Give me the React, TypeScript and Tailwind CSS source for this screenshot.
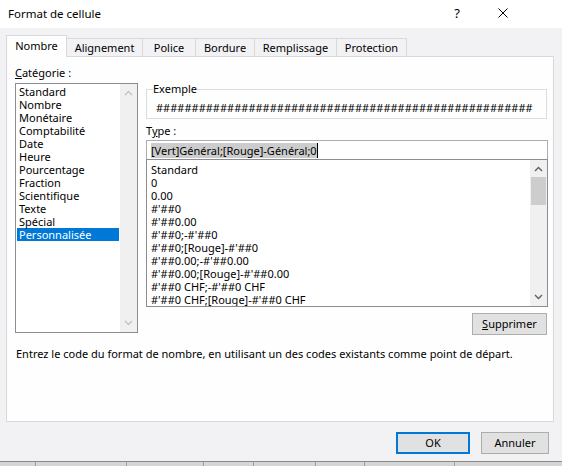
import React from "react";

const categories = [
  "Standard",
  "Nombre",
  "Monétaire",
  "Comptabilité",
  "Date",
  "Heure",
  "Pourcentage",
  "Fraction",
  "Scientifique",
  "Texte",
  "Spécial",
  "Personnalisée",
];

const formats = [
  "Standard",
  "0",
  "0.00",
  "#'##0",
  "#'##0.00",
  "#'##0;-#'##0",
  "#'##0;[Rouge]-#'##0",
  "#'##0.00;-#'##0.00",
  "#'##0.00;[Rouge]-#'##0.00",
  "#'##0 CHF;-#'##0 CHF",
  "#'##0 CHF;[Rouge]-#'##0 CHF",
];

const tabs = [
  { label: "Alignement", w: "w-[76px]" },
  { label: "Police", w: "w-[53px]" },
  { label: "Bordure", w: "w-[59px]" },
  { label: "Remplissage", w: "w-[82px]" },
  { label: "Protection", w: "w-[70px]" },
];

const Chevron: React.FC<{ up?: boolean; color: string }> = ({ up, color }) => (
  <svg width="9" height="6" viewBox="0 0 9 6" className="block">
    <path
      d={up ? "M1 5 L4.5 1.5 L8 5" : "M1 1 L4.5 4.5 L8 1"}
      fill="none"
      stroke={color}
      strokeWidth="1.4"
    />
  </svg>
);

export default function App() {
  return (
    <div className="w-[562px] h-[466px] overflow-hidden bg-[#f2f1f4] text-[11px] leading-[16px] text-black font-['Noto_Sans',sans-serif] flex flex-col">
      {/* title bar */}
      <div className="h-[28px] bg-white flex items-center pl-[8px] shrink-0">
        <span className="flex-1 text-[11.5px] -mt-[1px]">Format de cellule</span>
        <span className="w-[10px] text-center text-[13px] mr-[36px] -mt-[2px]">?</span>
        <svg width="10" height="10" viewBox="0 0 10 10" className="mr-[54px] -mt-[2px]">
          <path d="M0.5 0.5 L9.5 9.5 M9.5 0.5 L0.5 9.5" stroke="#000" strokeWidth="1" />
        </svg>
      </div>

      {/* tabs */}
      <div className="flex items-end pl-[6px] pt-[7px] -mb-px relative z-10">
        <div className="w-[61px] h-[22px] border border-b-0 border-[#d9d9d9] bg-[#fdfefd] flex items-center justify-center pb-[2px]">
          Nombre
        </div>
        {tabs.map((t) => (
          <div
            key={t.label}
            className={`${t.w} h-[19px] border-t border-r border-[#d9d9d9] flex items-center justify-center`}
          >
            {t.label}
          </div>
        ))}
      </div>

      {/* panel */}
      <div className="ml-[6px] w-[548px] h-[366px] border border-[#d9d9d9] bg-[#fdfefd] pt-[8px] pl-[8px] flex flex-col">
        <div className="flex">
          {/* category column */}
          <div className="w-[123px] flex flex-col">
            <span>
              <span className="underline">C</span>atégorie :
            </span>
            <div className="mt-[2px] h-[250px] border border-[#8b8d94] bg-white flex">
              <div className="flex-1 pt-[1px] px-[1px] leading-[13px]">
                {categories.map((c) => (
                  <div
                    key={c}
                    className={`pl-[2px] h-[13px] ${c === "Personnalisée" ? "bg-[#0078d7] text-white" : ""}`}
                  >
                    {c}
                  </div>
                ))}
              </div>
              <div className="w-[17px] bg-[#f0f0f0] flex flex-col items-center justify-between pt-[6px] pb-[6px]">
                <Chevron up color="#c3c3c3" />
                <Chevron color="#c3c3c3" />
              </div>
            </div>
          </div>

          {/* type column */}
          <div className="ml-[8px] w-[402px] flex flex-col">
            <fieldset className="mt-[16px] w-[401px] min-w-0 border border-[#dcdcdc] px-[9px] pt-[3px] pb-[2px]">
              <legend className="-ml-[3px]">Exemple</legend>
              <div className="whitespace-nowrap overflow-hidden">
                {"#".repeat(53)}
              </div>
            </fieldset>
            <span className="mt-[4px]">
              T<span className="underline">y</span>pe :
            </span>
            <div className="mt-[1px] h-[20px] border border-[#abadb3] bg-white flex items-center pl-[4px]">
              <span className="bg-[#cccccc] leading-[15px]">[Vert]Général;[Rouge]-Général;0</span>
              <span className="w-px h-[15px] bg-black" />
            </div>
            <div className="-mt-px h-[148px] border border-[#8b8d94] bg-white flex overflow-hidden">
              <div className="flex-1 pt-[3px] pl-[4px] leading-[13px]">
                {formats.map((f) => (
                  <div key={f} className="h-[13px] whitespace-nowrap">
                    {f}
                  </div>
                ))}
              </div>
              <div className="w-[17px] bg-[#f0f0f0] flex flex-col items-center pt-[6px] pb-[6px]">
                <Chevron up color="#606060" />
                <div className="mt-[5px] w-[15px] h-[28px] bg-[#cdcdcd]" />
                <div className="flex-1" />
                <Chevron color="#606060" />
              </div>
            </div>
            <div className="flex justify-end mt-[6px] mr-[1px]">
              <button className="w-[75px] h-[22px] border border-[#adadad] bg-[#e1e1e1] flex items-center justify-center">
                <span className="underline">S</span>upprimer
              </button>
            </div>
          </div>
        </div>
        <p className="mt-[11px] pl-[1px] whitespace-nowrap">
          Entrez le code du format de nombre, en utilisant un des codes existants comme point de départ.
        </p>
      </div>

      {/* dialog buttons */}
      <div className="flex justify-end pr-[13px] pt-[10px] gap-[11px]">
        <button className="w-[74px] h-[22px] border-2 border-[#0078d7] bg-[#e1e1e1] flex items-center justify-center">
          OK
        </button>
        <button className="w-[68px] h-[22px] border border-[#adadad] bg-[#e1e1e1] flex items-center justify-center">
          Annuler
        </button>
      </div>

      <div className="flex-1" />
      {/* worksheet behind the dialog */}
      <div className="h-[5px] shrink-0 border-t border-[#8a8a8a] bg-[#d6d6d6] flex">
        {[36, 91, 77, 50, 62, 49, 90].map((w, i) => (
          <div key={i} style={{ width: w }} className="border-r border-[#a0a0a0]" />
        ))}
      </div>
    </div>
  );
}
